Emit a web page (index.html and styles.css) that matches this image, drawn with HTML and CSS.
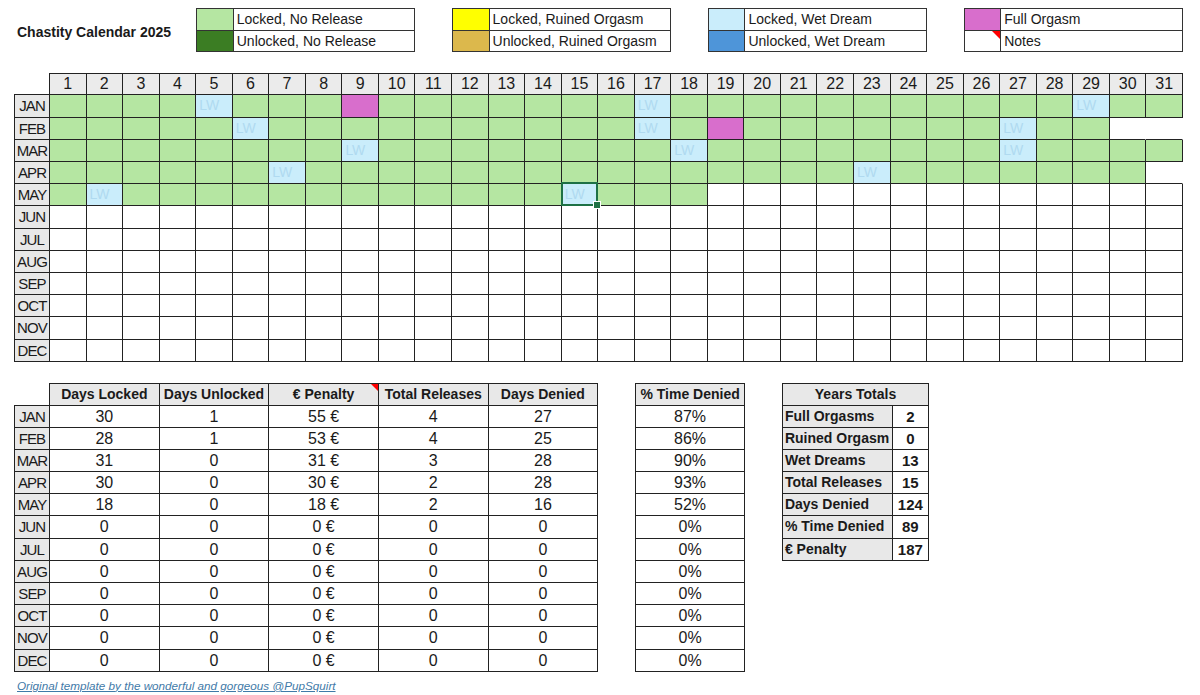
FILE: index.html
```html
<!DOCTYPE html>
<html lang="en">
<head>
<meta charset="utf-8">
<title>Chastity Calendar 2025</title>
<link rel="stylesheet" href="styles.css">
</head>
<body>
<header class="top">
  <div class="title">Chastity Calendar 2025</div>
  <div class="legend l1">
    <span class="sw g"></span><span>Locked, No Release</span>
    <span class="sw dg"></span><span>Unlocked, No Release</span>
  </div>
  <div class="legend l2">
    <span class="sw y"></span><span>Locked, Ruined Orgasm</span>
    <span class="sw gold"></span><span>Unlocked, Ruined Orgasm</span>
  </div>
  <div class="legend l3">
    <span class="sw lb"></span><span>Locked, Wet Dream</span>
    <span class="sw db"></span><span>Unlocked, Wet Dream</span>
  </div>
  <div class="legend l4">
    <span class="sw p"></span><span>Full Orgasm</span>
    <span class="sw note big"></span><span>Notes</span>
  </div>
</header>

<section class="cal">
  <span class="k"></span><span class="h">1</span><span class="h">2</span><span class="h">3</span><span class="h">4</span><span class="h">5</span><span class="h">6</span><span class="h">7</span><span class="h">8</span><span class="h">9</span><span class="h">10</span><span class="h">11</span><span class="h">12</span><span class="h">13</span><span class="h">14</span><span class="h">15</span><span class="h">16</span><span class="h">17</span><span class="h">18</span><span class="h">19</span><span class="h">20</span><span class="h">21</span><span class="h">22</span><span class="h">23</span><span class="h">24</span><span class="h">25</span><span class="h">26</span><span class="h">27</span><span class="h">28</span><span class="h">29</span><span class="h">30</span><span class="h">31</span>

  <span class="m">JAN</span><span class="g"></span><span class="g"></span><span class="g"></span><span class="g"></span><span class="b">LW</span><span class="g"></span><span class="g"></span><span class="g"></span><span class="p"></span><span class="g"></span><span class="g"></span><span class="g"></span><span class="g"></span><span class="g"></span><span class="g"></span><span class="g"></span><span class="b">LW</span><span class="g"></span><span class="g"></span><span class="g"></span><span class="g"></span><span class="g"></span><span class="g"></span><span class="g"></span><span class="g"></span><span class="g"></span><span class="g"></span><span class="g"></span><span class="b">LW</span><span class="g"></span><span class="g"></span>

  <span class="m">FEB</span><span class="g"></span><span class="g"></span><span class="g"></span><span class="g"></span><span class="g"></span><span class="b">LW</span><span class="g"></span><span class="g"></span><span class="g"></span><span class="g"></span><span class="g"></span><span class="g"></span><span class="g"></span><span class="g"></span><span class="g"></span><span class="g"></span><span class="b">LW</span><span class="g"></span><span class="p"></span><span class="g"></span><span class="g"></span><span class="g"></span><span class="g"></span><span class="g"></span><span class="g"></span><span class="g"></span><span class="b">LW</span><span class="g"></span><span class="g"></span><span class="x"></span><span class="x"></span>

  <span class="m">MAR</span><span class="g"></span><span class="g"></span><span class="g"></span><span class="g"></span><span class="g"></span><span class="g"></span><span class="g"></span><span class="g"></span><span class="b">LW</span><span class="g"></span><span class="g"></span><span class="g"></span><span class="g"></span><span class="g"></span><span class="g"></span><span class="g"></span><span class="g"></span><span class="b">LW</span><span class="g"></span><span class="g"></span><span class="g"></span><span class="g"></span><span class="g"></span><span class="g"></span><span class="g"></span><span class="g"></span><span class="b">LW</span><span class="g"></span><span class="g"></span><span class="g"></span><span class="g"></span>

  <span class="m">APR</span><span class="g"></span><span class="g"></span><span class="g"></span><span class="g"></span><span class="g"></span><span class="g"></span><span class="b">LW</span><span class="g"></span><span class="g"></span><span class="g"></span><span class="g"></span><span class="g"></span><span class="g"></span><span class="g"></span><span class="g"></span><span class="g"></span><span class="g"></span><span class="g"></span><span class="g"></span><span class="g"></span><span class="g"></span><span class="g"></span><span class="b">LW</span><span class="g"></span><span class="g"></span><span class="g"></span><span class="g"></span><span class="g"></span><span class="g"></span><span class="g"></span><span class="x"></span>

  <span class="m">MAY</span><span class="g"></span><span class="b">LW</span><span class="g"></span><span class="g"></span><span class="g"></span><span class="g"></span><span class="g"></span><span class="g"></span><span class="g"></span><span class="g"></span><span class="g"></span><span class="g"></span><span class="g"></span><span class="g"></span><span class="b sel">LW</span><span class="g"></span><span class="g"></span><span class="g"></span><span></span><span></span><span></span><span></span><span></span><span></span><span></span><span></span><span></span><span></span><span></span><span></span><span></span>

  <span class="m">JUN</span><span></span><span></span><span></span><span></span><span></span><span></span><span></span><span></span><span></span><span></span><span></span><span></span><span></span><span></span><span></span><span></span><span></span><span></span><span></span><span></span><span></span><span></span><span></span><span></span><span></span><span></span><span></span><span></span><span></span><span></span><span></span>
  <span class="m">JUL</span><span></span><span></span><span></span><span></span><span></span><span></span><span></span><span></span><span></span><span></span><span></span><span></span><span></span><span></span><span></span><span></span><span></span><span></span><span></span><span></span><span></span><span></span><span></span><span></span><span></span><span></span><span></span><span></span><span></span><span></span><span></span>
  <span class="m">AUG</span><span></span><span></span><span></span><span></span><span></span><span></span><span></span><span></span><span></span><span></span><span></span><span></span><span></span><span></span><span></span><span></span><span></span><span></span><span></span><span></span><span></span><span></span><span></span><span></span><span></span><span></span><span></span><span></span><span></span><span></span><span></span>
  <span class="m">SEP</span><span></span><span></span><span></span><span></span><span></span><span></span><span></span><span></span><span></span><span></span><span></span><span></span><span></span><span></span><span></span><span></span><span></span><span></span><span></span><span></span><span></span><span></span><span></span><span></span><span></span><span></span><span></span><span></span><span></span><span></span><span></span>
  <span class="m">OCT</span><span></span><span></span><span></span><span></span><span></span><span></span><span></span><span></span><span></span><span></span><span></span><span></span><span></span><span></span><span></span><span></span><span></span><span></span><span></span><span></span><span></span><span></span><span></span><span></span><span></span><span></span><span></span><span></span><span></span><span></span><span></span>
  <span class="m">NOV</span><span></span><span></span><span></span><span></span><span></span><span></span><span></span><span></span><span></span><span></span><span></span><span></span><span></span><span></span><span></span><span></span><span></span><span></span><span></span><span></span><span></span><span></span><span></span><span></span><span></span><span></span><span></span><span></span><span></span><span></span><span></span>
  <span class="m">DEC</span><span></span><span></span><span></span><span></span><span></span><span></span><span></span><span></span><span></span><span></span><span></span><span></span><span></span><span></span><span></span><span></span><span></span><span></span><span></span><span></span><span></span><span></span><span></span><span></span><span></span><span></span><span></span><span></span><span></span><span></span><span></span>
</section>

<section class="stats">
  <div class="t1">
    <span class="k"></span><span class="h">Days Locked</span><span class="h">Days Unlocked</span><span class="h note">€ Penalty</span><span class="h">Total Releases</span><span class="h">Days Denied</span>
    <span class="m">JAN</span><span>30</span><span>1</span><span>55 €</span><span>4</span><span>27</span>
    <span class="m">FEB</span><span>28</span><span>1</span><span>53 €</span><span>4</span><span>25</span>
    <span class="m">MAR</span><span>31</span><span>0</span><span>31 €</span><span>3</span><span>28</span>
    <span class="m">APR</span><span>30</span><span>0</span><span>30 €</span><span>2</span><span>28</span>
    <span class="m">MAY</span><span>18</span><span>0</span><span>18 €</span><span>2</span><span>16</span>
    <span class="m">JUN</span><span>0</span><span>0</span><span>0 €</span><span>0</span><span>0</span>
    <span class="m">JUL</span><span>0</span><span>0</span><span>0 €</span><span>0</span><span>0</span>
    <span class="m">AUG</span><span>0</span><span>0</span><span>0 €</span><span>0</span><span>0</span>
    <span class="m">SEP</span><span>0</span><span>0</span><span>0 €</span><span>0</span><span>0</span>
    <span class="m">OCT</span><span>0</span><span>0</span><span>0 €</span><span>0</span><span>0</span>
    <span class="m">NOV</span><span>0</span><span>0</span><span>0 €</span><span>0</span><span>0</span>
    <span class="m">DEC</span><span>0</span><span>0</span><span>0 €</span><span>0</span><span>0</span>
  </div>

  <div class="t2">
    <span class="h">% Time Denied</span>
    <span>87%</span><span>86%</span><span>90%</span><span>93%</span><span>52%</span><span>0%</span><span>0%</span><span>0%</span><span>0%</span><span>0%</span><span>0%</span><span>0%</span>
  </div>

  <div class="t3">
    <span class="h span2">Years Totals</span>
    <span class="lab">Full Orgasms</span><span class="val">2</span>
    <span class="lab">Ruined Orgasm</span><span class="val">0</span>
    <span class="lab">Wet Dreams</span><span class="val">13</span>
    <span class="lab">Total Releases</span><span class="val">15</span>
    <span class="lab">Days Denied</span><span class="val">124</span>
    <span class="lab">% Time Denied</span><span class="val">89</span>
    <span class="lab">€ Penalty</span><span class="val">187</span>
  </div>
</section>

<footer class="foot">
  <a href="#">Original template by the wonderful and gorgeous @PupSquirt</a>
</footer>
</body>
</html>
```

FILE: styles.css
```css
* { box-sizing: border-box; }

html, body {
  margin: 0;
  background: #fff;
}

body {
  width: 1200px;
  height: 695px;
  overflow: hidden;
  padding: 8px 0 0 14px;
  font-family: "Liberation Sans", Arial, sans-serif;
  color: #1a1a1a;
}

/* ---------- top: title + legend ---------- */
.top {
  display: grid;
  grid-template-columns: 36px repeat(31, 36.55px);
  height: 44px;
}

.title {
  grid-column: 1 / 6;
  align-self: center;
  margin-top: 3px;
  padding-left: 3px;
  font-size: 14px;
  font-weight: bold;
  white-space: nowrap;
}

.legend {
  display: grid;
  grid-template-columns: 36.55px 1fr;
  grid-template-rows: 21.65px 21.65px;
  border-top: 1px solid #333;
  border-left: 1px solid #333;
}

.legend > span {
  border-right: 1px solid #333;
  border-bottom: 1px solid #333;
  padding-left: 3px;
  font-size: 14px;
  line-height: 20px;
  white-space: nowrap;
}

.l1 { grid-column: 6 / 12; }
.l2 { grid-column: 13 / 19; }
.l3 { grid-column: 20 / 26; }
.l4 { grid-column: 27 / 33; }

.sw.g    { background: #b5e6a2; }
.sw.dg   { background: #3b7d23; }
.sw.y    { background: #ffff00; }
.sw.gold { background: #dcb84c; }
.sw.lb   { background: #caedfb; }
.sw.db   { background: #4e95d9; }
.sw.p    { background: #d86ecc; }

/* red comment indicator */
.note { position: relative; }
.note::after {
  content: "";
  position: absolute;
  top: 0;
  right: 0;
  border-top: 7px solid #f00;
  border-left: 7px solid transparent;
}
.note.big::after {
  border-top-width: 8px;
  border-left-width: 8px;
}

/* ---------- calendar ---------- */
.cal {
  display: grid;
  grid-template-columns: 36px repeat(31, 36.55px);
  grid-auto-rows: 22.2px;
  margin-top: 21.3px;
}

.cal > span {
  border-right: 1px solid #222;
  border-bottom: 1px solid #222;
  font-size: 16px;
  line-height: 21px;
  text-align: center;
}

.cal .k { border-right: 1px solid #222; }

.cal .h {
  border-top: 1px solid #222;
  background: #ebebeb;
  line-height: 20px;
}

.m {
  background: #e8e8e8;
  border-left: 1px solid #222;
  font-size: 15px;
  letter-spacing: -0.9px;
  text-align: center;
}

.cal .m { font-size: 15px; }

.cal .g { background: #b5e6a2; }
.cal .p { background: #d86ecc; }
.cal .b {
  background: #caedfb;
  color: #b0daf0;
  text-align: left;
  padding-left: 3px;
  font-size: 14px;
}
.cal .x { border-right-color: transparent; }

/* selected cell */
.sel { position: relative; }
.sel::after {
  content: "";
  position: absolute;
  top: -2px;
  left: -1px;
  right: -1px;
  bottom: -1px;
  border: 2px solid #1e7145;
}
.sel::before {
  content: "";
  position: absolute;
  right: -4px;
  bottom: -4px;
  width: 6px;
  height: 6px;
  background: #1e7145;
  border: 1px solid #fff;
  z-index: 2;
}

/* ---------- stats tables ---------- */
.stats {
  display: flex;
  align-items: flex-start;
  gap: 36.55px;
  margin-top: 21.6px;
}

.t1, .t2, .t3 {
  display: grid;
  grid-auto-rows: 22.2px;
}

.t1 { grid-template-columns: 36px repeat(5, 109.65px); }
.t2 { grid-template-columns: 109.65px; border-left: 1px solid #222; }
.t3 { grid-template-columns: 109.65px 36.55px; border-left: 1px solid #222; }

.t1 > span, .t2 > span, .t3 > span {
  border-right: 1px solid #222;
  border-bottom: 1px solid #222;
  font-size: 16px;
  line-height: 21px;
  text-align: center;
  white-space: nowrap;
  overflow: hidden;
}

.t1 > .m { font-size: 15px; }

.t1 .k { border-bottom: 1px solid #222; }

.t1 .h, .t2 .h, .t3 .h {
  border-top: 1px solid #222;
  background: #e8e8e8;
  font-size: 14px;
  font-weight: bold;
  line-height: 20px;
}

.t1 .note { overflow: visible; }

.span2 { grid-column: 1 / 3; }

.t3 .lab {
  background: #e8e8e8;
  font-size: 14px;
  font-weight: bold;
  text-align: left;
  padding-left: 2px;
  overflow: hidden;
}

.t3 .val {
  font-size: 15px;
  font-weight: bold;
}

/* ---------- footer ---------- */
.foot {
  margin-top: 7px;
  padding-left: 3px;
  font-size: 11.7px;
  font-style: italic;
  line-height: 14px;
}

.foot a {
  color: #3f7aa8;
  text-decoration: underline;
}
```
